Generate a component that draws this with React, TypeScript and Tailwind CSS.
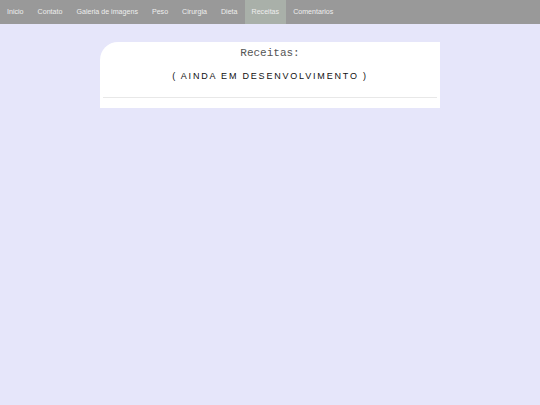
const links = ['Inicio', 'Contato', 'Galeria de imagens', 'Peso', 'Cirurgia', 'Dieta', 'Receitas', 'Comentarios']

export default function App() {
  return (
    <div className="min-h-[405px] bg-[#e6e6fa] font-['Liberation_Sans',Arial,sans-serif]">
      <nav className="flex h-6 bg-[#999999]">
        {links.map((l) => (
          <a
            key={l}
            className={
              'flex items-center px-[7px] text-[7.1px] text-[#eeeeee] ' +
              (l === 'Receitas' ? 'bg-[#a9b0a9]' : '')
            }
          >
            {l}
          </a>
        ))}
      </nav>
      <div className="mx-auto mt-[18px] w-[340px] rounded-tl-[18px] bg-white px-[3px] pb-[10px]">
        <h1 className="pt-[4px] text-center font-['Liberation_Mono','Courier_New',monospace] text-[11px] leading-[14px] text-[#555555]">
          Receitas:
        </h1>
        <p className="mt-[10px] text-center text-[9px] leading-[12px] tracking-[1.8px] text-[#111111]">
          ( AINDA EM DESENVOLVIMENTO )
        </p>
        <hr className="mt-[15px] border-t border-[#e8e8e8]" />
      </div>
    </div>
  )
}
